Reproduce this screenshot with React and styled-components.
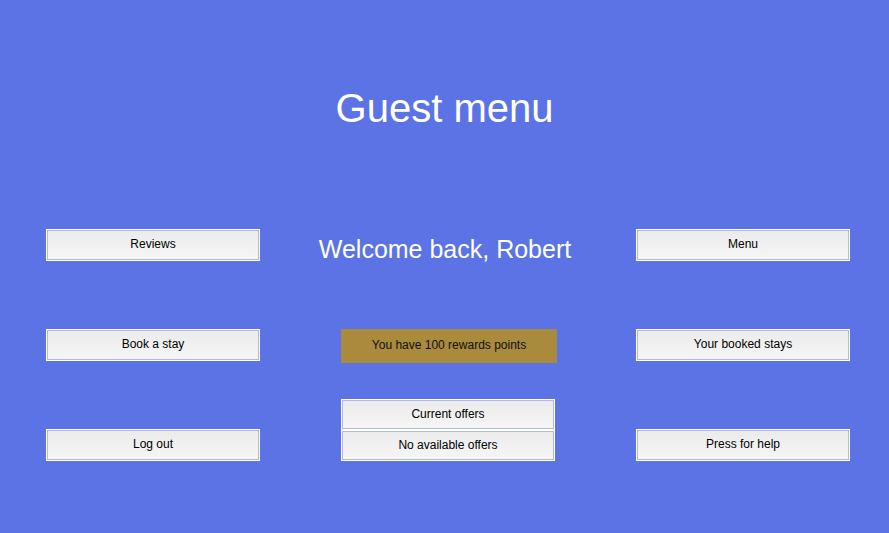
import React from "react"
import styled, { createGlobalStyle } from "styled-components"

const GlobalStyle = createGlobalStyle`
  html, body {
    margin: 0;
    padding: 0;
    background: #5b73e4;
  }
  body {
    font-family: "Liberation Sans", Arial, sans-serif;
  }
`

const Page = styled.div`
  width: 889px;
  height: 533px;
  background: #5b73e4;
  overflow: hidden;
`

const Title = styled.h1`
  margin: 0;
  padding-top: 85px;
  text-align: center;
  color: #fff;
  font-size: 40px;
  font-weight: 400;
  line-height: 46px;
`

const Board = styled.div`
  margin-top: 98px;
  padding-left: 46px;
  display: grid;
  grid-template-columns: repeat(3, 214px);
  grid-template-rows: repeat(3, 32px);
  column-gap: 81px;
  row-gap: 68px;
  align-items: start;
`

const Button = styled.button`
  box-sizing: border-box;
  width: 214px;
  height: ${(p) => p.$h || 32}px;
  margin: 0;
  padding: 0 0 2px;
  border: 1px solid #fff;
  box-shadow: inset 0 0 0 1px #b3bbd3;
  background: linear-gradient(#ebebeb, #f6f6f6);
  color: #000;
  font-family: "Liberation Sans", Arial, sans-serif;
  font-size: 12px;
  cursor: pointer;
`

const Welcome = styled.div`
  margin: 0 -27px 0 -33px;
  align-self: center;
  text-align: center;
  color: #fff;
  font-size: 25px;
  line-height: 29px;
  white-space: nowrap;
  padding-top: 9px;
`

const Rewards = styled.div`
  width: 216px;
  height: 34px;
  padding-bottom: 2px;
  box-sizing: border-box;
  background: #aa8a3c;
  color: #111;
  font-size: 12px;
  display: flex;
  align-items: center;
  justify-content: center;
`

const Offers = styled.div`
  margin-top: -30px;
  display: flex;
  flex-direction: column;
`

export default function App() {
  return (
    <Page>
      <GlobalStyle />
      <Title>Guest menu</Title>
      <Board>
        <Button>Reviews</Button>
        <Welcome>Welcome back, Robert</Welcome>
        <Button>Menu</Button>

        <Button>Book a stay</Button>
        <Rewards>You have 100 rewards points</Rewards>
        <Button>Your booked stays</Button>

        <Button>Log out</Button>
        <Offers>
          <Button $h={31}>Current offers</Button>
          <Button $h={31}>No available offers</Button>
        </Offers>
        <Button>Press for help</Button>
      </Board>
    </Page>
  )
}
